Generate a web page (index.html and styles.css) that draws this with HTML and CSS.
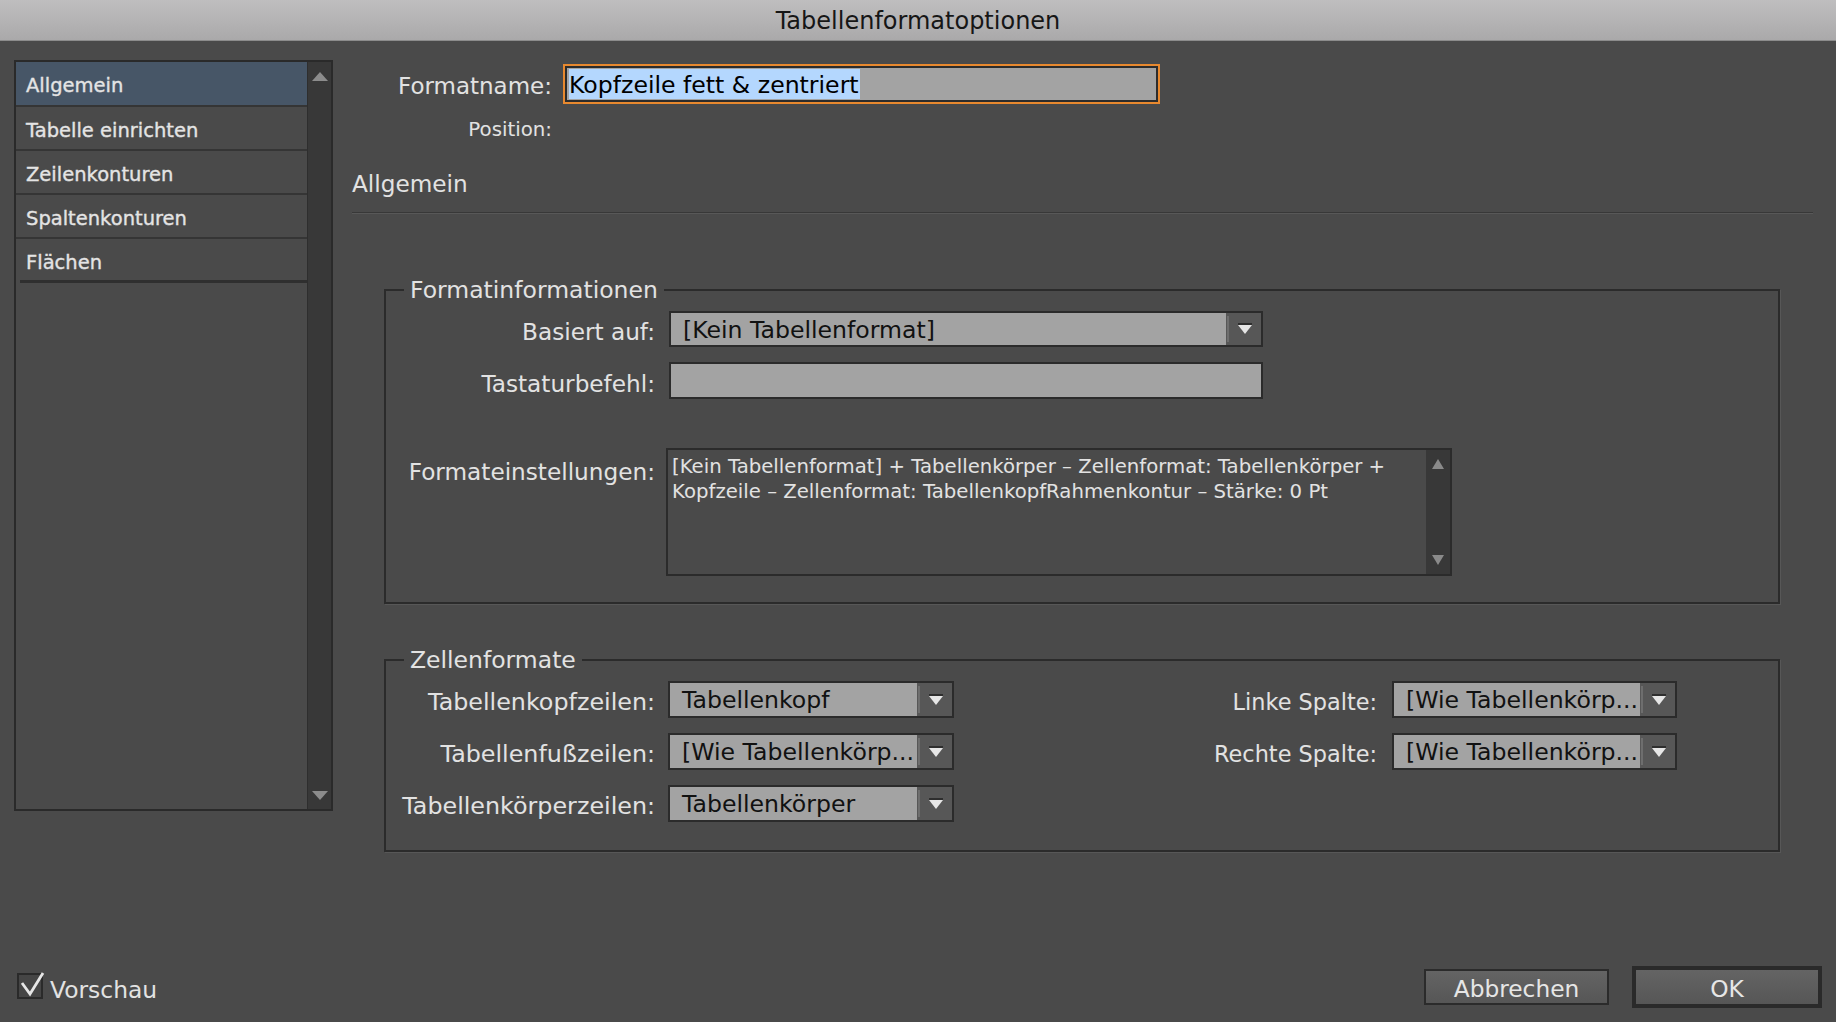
FILE: index.html
```html
<!DOCTYPE html>
<html lang="de">
<head>
<meta charset="utf-8">
<title>Tabellenformatoptionen</title>
<link rel="stylesheet" href="styles.css">
</head>
<body>
<div class="window">
  <header class="titlebar"><span class="title">Tabellenformatoptionen</span></header>

  <div class="content">
    <nav class="sidebar">
      <ul class="nav-list">
        <li class="nav-item active">Allgemein</li>
        <li class="nav-item">Tabelle einrichten</li>
        <li class="nav-item">Zeilenkonturen</li>
        <li class="nav-item">Spaltenkonturen</li>
        <li class="nav-item last">Flächen</li>
      </ul>
      <div class="scrollbar">
        <svg class="sb-arrow" width="16" height="10" viewBox="0 0 16 10"><polygon points="0,10 16,10 8,1" fill="#8c8c8c"/></svg>
        <svg class="sb-arrow" width="16" height="10" viewBox="0 0 16 10"><polygon points="0,0 16,0 8,9" fill="#8c8c8c"/></svg>
      </div>
    </nav>

    <main class="main">
      <div class="name-row">
        <span class="top-label">Formatname:</span>
        <div class="name-input"><span class="selection">Kopfzeile fett &amp; zentriert</span></div>
      </div>
      <div class="pos-row"><span class="pos-label">Position:</span></div>

      <h2 class="section-title">Allgemein</h2>
      <div class="divider"></div>

      <fieldset class="group group-info">
        <legend class="legend">Formatinformationen</legend>
        <div class="info-grid">
          <span class="label">Basiert auf:</span>
          <div class="select select-wide">
            <span class="select-text">[Kein Tabellenformat]</span>
            <span class="select-btn"><svg width="14" height="12" viewBox="0 0 14 12"><rect x="0" y="0" width="14" height="2" fill="#2e2e2e"/><polygon points="0,2 14,2 7,11" fill="#e6e6e6"/></svg></span>
          </div>

          <span class="label">Tastaturbefehl:</span>
          <div class="textfield"></div>

          <span class="label label-top">Formateinstellungen:</span>
          <div class="textarea">
            <div class="textarea-text">[Kein Tabellenformat] + Tabellenkörper – Zellenformat: Tabellenkörper +<br>Kopfzeile – Zellenformat: TabellenkopfRahmenkontur – Stärke: 0 Pt</div>
            <div class="ta-scroll">
              <svg width="12" height="10" viewBox="0 0 12 10"><polygon points="0,10 12,10 6,0" fill="#8a8a8a"/></svg>
              <svg width="12" height="10" viewBox="0 0 12 10"><polygon points="0,0 12,0 6,10" fill="#8a8a8a"/></svg>
            </div>
          </div>
        </div>
      </fieldset>

      <fieldset class="group group-cells">
        <legend class="legend">Zellenformate</legend>
        <div class="cells-grid">
          <span class="label label-left">Tabellenkopfzeilen:</span>
          <div class="select">
            <span class="select-text">Tabellenkopf</span>
            <span class="select-btn"><svg width="14" height="12" viewBox="0 0 14 12"><rect x="0" y="0" width="14" height="2" fill="#2e2e2e"/><polygon points="0,2 14,2 7,11" fill="#e6e6e6"/></svg></span>
          </div>
          <span class="label label-right">Linke Spalte:</span>
          <div class="select">
            <span class="select-text">[Wie Tabellenkörp...</span>
            <span class="select-btn"><svg width="14" height="12" viewBox="0 0 14 12"><rect x="0" y="0" width="14" height="2" fill="#2e2e2e"/><polygon points="0,2 14,2 7,11" fill="#e6e6e6"/></svg></span>
          </div>

          <span class="label label-left">Tabellenfußzeilen:</span>
          <div class="select">
            <span class="select-text">[Wie Tabellenkörp...</span>
            <span class="select-btn"><svg width="14" height="12" viewBox="0 0 14 12"><rect x="0" y="0" width="14" height="2" fill="#2e2e2e"/><polygon points="0,2 14,2 7,11" fill="#e6e6e6"/></svg></span>
          </div>
          <span class="label label-right">Rechte Spalte:</span>
          <div class="select">
            <span class="select-text">[Wie Tabellenkörp...</span>
            <span class="select-btn"><svg width="14" height="12" viewBox="0 0 14 12"><rect x="0" y="0" width="14" height="2" fill="#2e2e2e"/><polygon points="0,2 14,2 7,11" fill="#e6e6e6"/></svg></span>
          </div>

          <span class="label label-left">Tabellenkörperzeilen:</span>
          <div class="select">
            <span class="select-text">Tabellenkörper</span>
            <span class="select-btn"><svg width="14" height="12" viewBox="0 0 14 12"><rect x="0" y="0" width="14" height="2" fill="#2e2e2e"/><polygon points="0,2 14,2 7,11" fill="#e6e6e6"/></svg></span>
          </div>
        </div>
      </fieldset>
    </main>
  </div>

  <footer class="footer">
    <label class="check">
      <svg class="check-box" width="30" height="30" viewBox="0 0 30 30">
        <rect x="2" y="4" width="24" height="24" fill="#525252"/>
        <rect x="1" y="3" width="24" height="24" fill="#454545" stroke="#2a2a2a" stroke-width="2"/>
        <polyline points="5,12 13,23 26,2" fill="none" stroke="#e6e6e6" stroke-width="2.8" stroke-linejoin="miter"/>
      </svg>
      <span class="check-text">Vorschau</span>
    </label>
    <div class="buttons">
      <button class="btn">Abbrechen</button>
      <button class="btn btn-default">OK</button>
    </div>
  </footer>
</div>
</body>
</html>
```

FILE: styles.css
```css
* { box-sizing: border-box; }

html, body {
  margin: 0;
  padding: 0;
  background: #4a4a4a;
}

body {
  font-family: "DejaVu Sans", "Liberation Sans", sans-serif;
  color: #e2e2e2;
}

.window {
  width: 1836px;
  height: 1022px;
  display: flex;
  flex-direction: column;
  overflow: hidden;
}

/* title bar */
.titlebar {
  height: 41px;
  flex: none;
  display: flex;
  align-items: center;
  justify-content: center;
  background: linear-gradient(#bfbebf, #aaa9aa);
  border-bottom: 1px solid #8c8c8c;
}
.title {
  font-size: 24px;
  color: #161616;
  padding-top: 2px;
}

/* content */
.content {
  flex: 1;
  display: flex;
  align-items: flex-start;
  padding: 19px 0 0 14px;
}

/* sidebar */
.sidebar {
  width: 319px;
  height: 751px;
  flex: none;
  display: flex;
  border: 2px solid #2a2a2a;
  background: #4a4a4a;
}
.nav-list {
  list-style: none;
  margin: 0;
  padding: 0;
  flex: 1;
}
.nav-item {
  height: 44px;
  padding: 4px 0 0 10px;
  line-height: 40px;
  font-size: 19.5px;
  color: #e4e4e4;
  -webkit-text-stroke: 0.35px #e4e4e4;
  border-bottom: 2px solid #353535;
}
.nav-item.active {
  background: #475667;
  height: 45px;
}
.nav-item.last {
  border-bottom: 3px solid #2f2f2f;
  margin-left: 4px;
  padding-left: 6px;
}
.scrollbar {
  width: 24px;
  flex: none;
  background: #383838;
  border-left: 1px solid #2e2e2e;
  display: flex;
  flex-direction: column;
  justify-content: space-between;
  align-items: center;
  padding: 9px 0 8px;
}

/* main */
.main {
  flex: 1;
  margin-left: 19px;
  margin-right: 23px;
  display: flex;
  flex-direction: column;
}

.name-row {
  margin-top: 4px;
  height: 40px;
  display: flex;
  align-items: center;
}
.top-label {
  width: 200px;
  text-align: right;
  margin-right: 11px;
  padding-top: 3px;
  font-size: 23px;
}
.name-input {
  width: 597px;
  height: 40px;
  border: 2px solid #e8892f;
  box-shadow: inset 0 0 0 2px #2c2c2c;
  background: #a3a3a3;
  padding: 3px 4px;
}
.selection {
  display: inline-block;
  height: 30px;
  padding-top: 3px;
  line-height: 27px;
  background: #b4d7fe;
  color: #000;
  font-size: 23.6px;
  padding-right: 1px;
}

.pos-row {
  margin-top: 14px;
  height: 24px;
  display: flex;
}
.pos-label {
  width: 200px;
  text-align: right;
  font-size: 19.8px;
  line-height: 24px;
}

.section-title {
  margin: 28px 0 0;
  font-weight: normal;
  font-size: 23.2px;
  line-height: 28px;
  color: #e2e2e2;
}
.divider {
  margin-top: 14px;
  border-top: 1px solid #383838;
  border-bottom: 1px solid #585858;
}

/* groups */
.group {
  margin: 62px 33px 0 32px;
  padding: 7px 0 26px;
  border: 2px solid #2b2b2b;
  box-shadow: 1px 1px 0 #575757;
  min-width: 0;
}
.group-cells {
  margin-top: 42px;
  padding: 7px 101px 28px 0;
}
.legend {
  margin-left: 18px;
  padding: 0 6px;
  font-size: 23.5px;
  line-height: 28px;
  color: #e2e2e2;
}

.label {
  font-size: 23.2px;
  text-align: right;
  white-space: nowrap;
  padding-top: 5px;
}
.label-top {
  align-self: start;
  margin-top: 39px;
}
.label-left {
  font-size: 23.8px;
}
.label-right {
  padding-right: 2px;
  font-size: 22.4px;
}

.info-grid {
  display: grid;
  grid-template-columns: 269px 1fr;
  column-gap: 14px;
  row-gap: 15px;
  align-items: center;
  justify-items: start;
}
.info-grid .label { justify-self: end; }

.cells-grid {
  display: grid;
  grid-template-columns: 269px 286px 1fr 285px;
  column-gap: 13px;
  row-gap: 15px;
  align-items: center;
}
.cells-grid .label { justify-self: end; }

/* select */
.select {
  height: 37px;
  width: 100%;
  display: flex;
  border: 2px solid #2b2b2b;
}
.select-wide {
  width: 594px;
  height: 36px;
}
.select-text {
  flex: 1;
  min-width: 0;
  background: #a3a3a3;
  color: #111;
  font-size: 23.6px;
  line-height: 32px;
  padding: 1px 0 0 12px;
  white-space: nowrap;
  overflow: hidden;
}
.select-btn {
  width: 35px;
  flex: none;
  display: flex;
  align-items: center;
  justify-content: center;
  padding-left: 3px;
  background: linear-gradient(#6e6e6e, #6e6e6e) 1px 3px / 2px calc(100% - 6px) no-repeat, #575757;
}

.textfield {
  width: 594px;
  height: 37px;
  border: 2px solid #2b2b2b;
  background: #a3a3a3;
}

.textarea {
  width: 786px;
  height: 128px;
  margin-left: -3px;
  margin-top: 34px;
  border: 2px solid #2b2b2b;
  display: flex;
}
.textarea-text {
  flex: 1;
  padding: 4px 4px 0;
  font-size: 19.7px;
  line-height: 25px;
  color: #e2e2e2;
  white-space: nowrap;
}
.ta-scroll {
  width: 24px;
  flex: none;
  background: #383838;
  display: flex;
  flex-direction: column;
  justify-content: space-between;
  align-items: center;
  padding: 9px 0 9px;
}

/* footer */
.footer {
  height: 70px;
  flex: none;
  display: flex;
  align-items: center;
  justify-content: space-between;
  padding: 0 14px 0 17px;
}
.check {
  display: flex;
  align-items: center;
}
.check-box {
  display: block;
  margin-top: -2px;
}
.check-text {
  margin-left: 3px;
  padding-top: 6px;
  font-size: 23.4px;
  color: #e2e2e2;
}
.buttons {
  display: flex;
  align-items: center;
  gap: 23px;
}
.btn {
  width: 185px;
  height: 36px;
  border: 2px solid #2b2b2b;
  background: linear-gradient(#646464, #565656);
  color: #e6e6e6;
  font-family: "DejaVu Sans", "Liberation Sans", sans-serif;
  font-size: 23.3px;
  line-height: 30px;
  padding: 3px 0 0;
}
.btn-default {
  width: 190px;
  height: 42px;
  border: 4px solid #2a2a2a;
}
```
